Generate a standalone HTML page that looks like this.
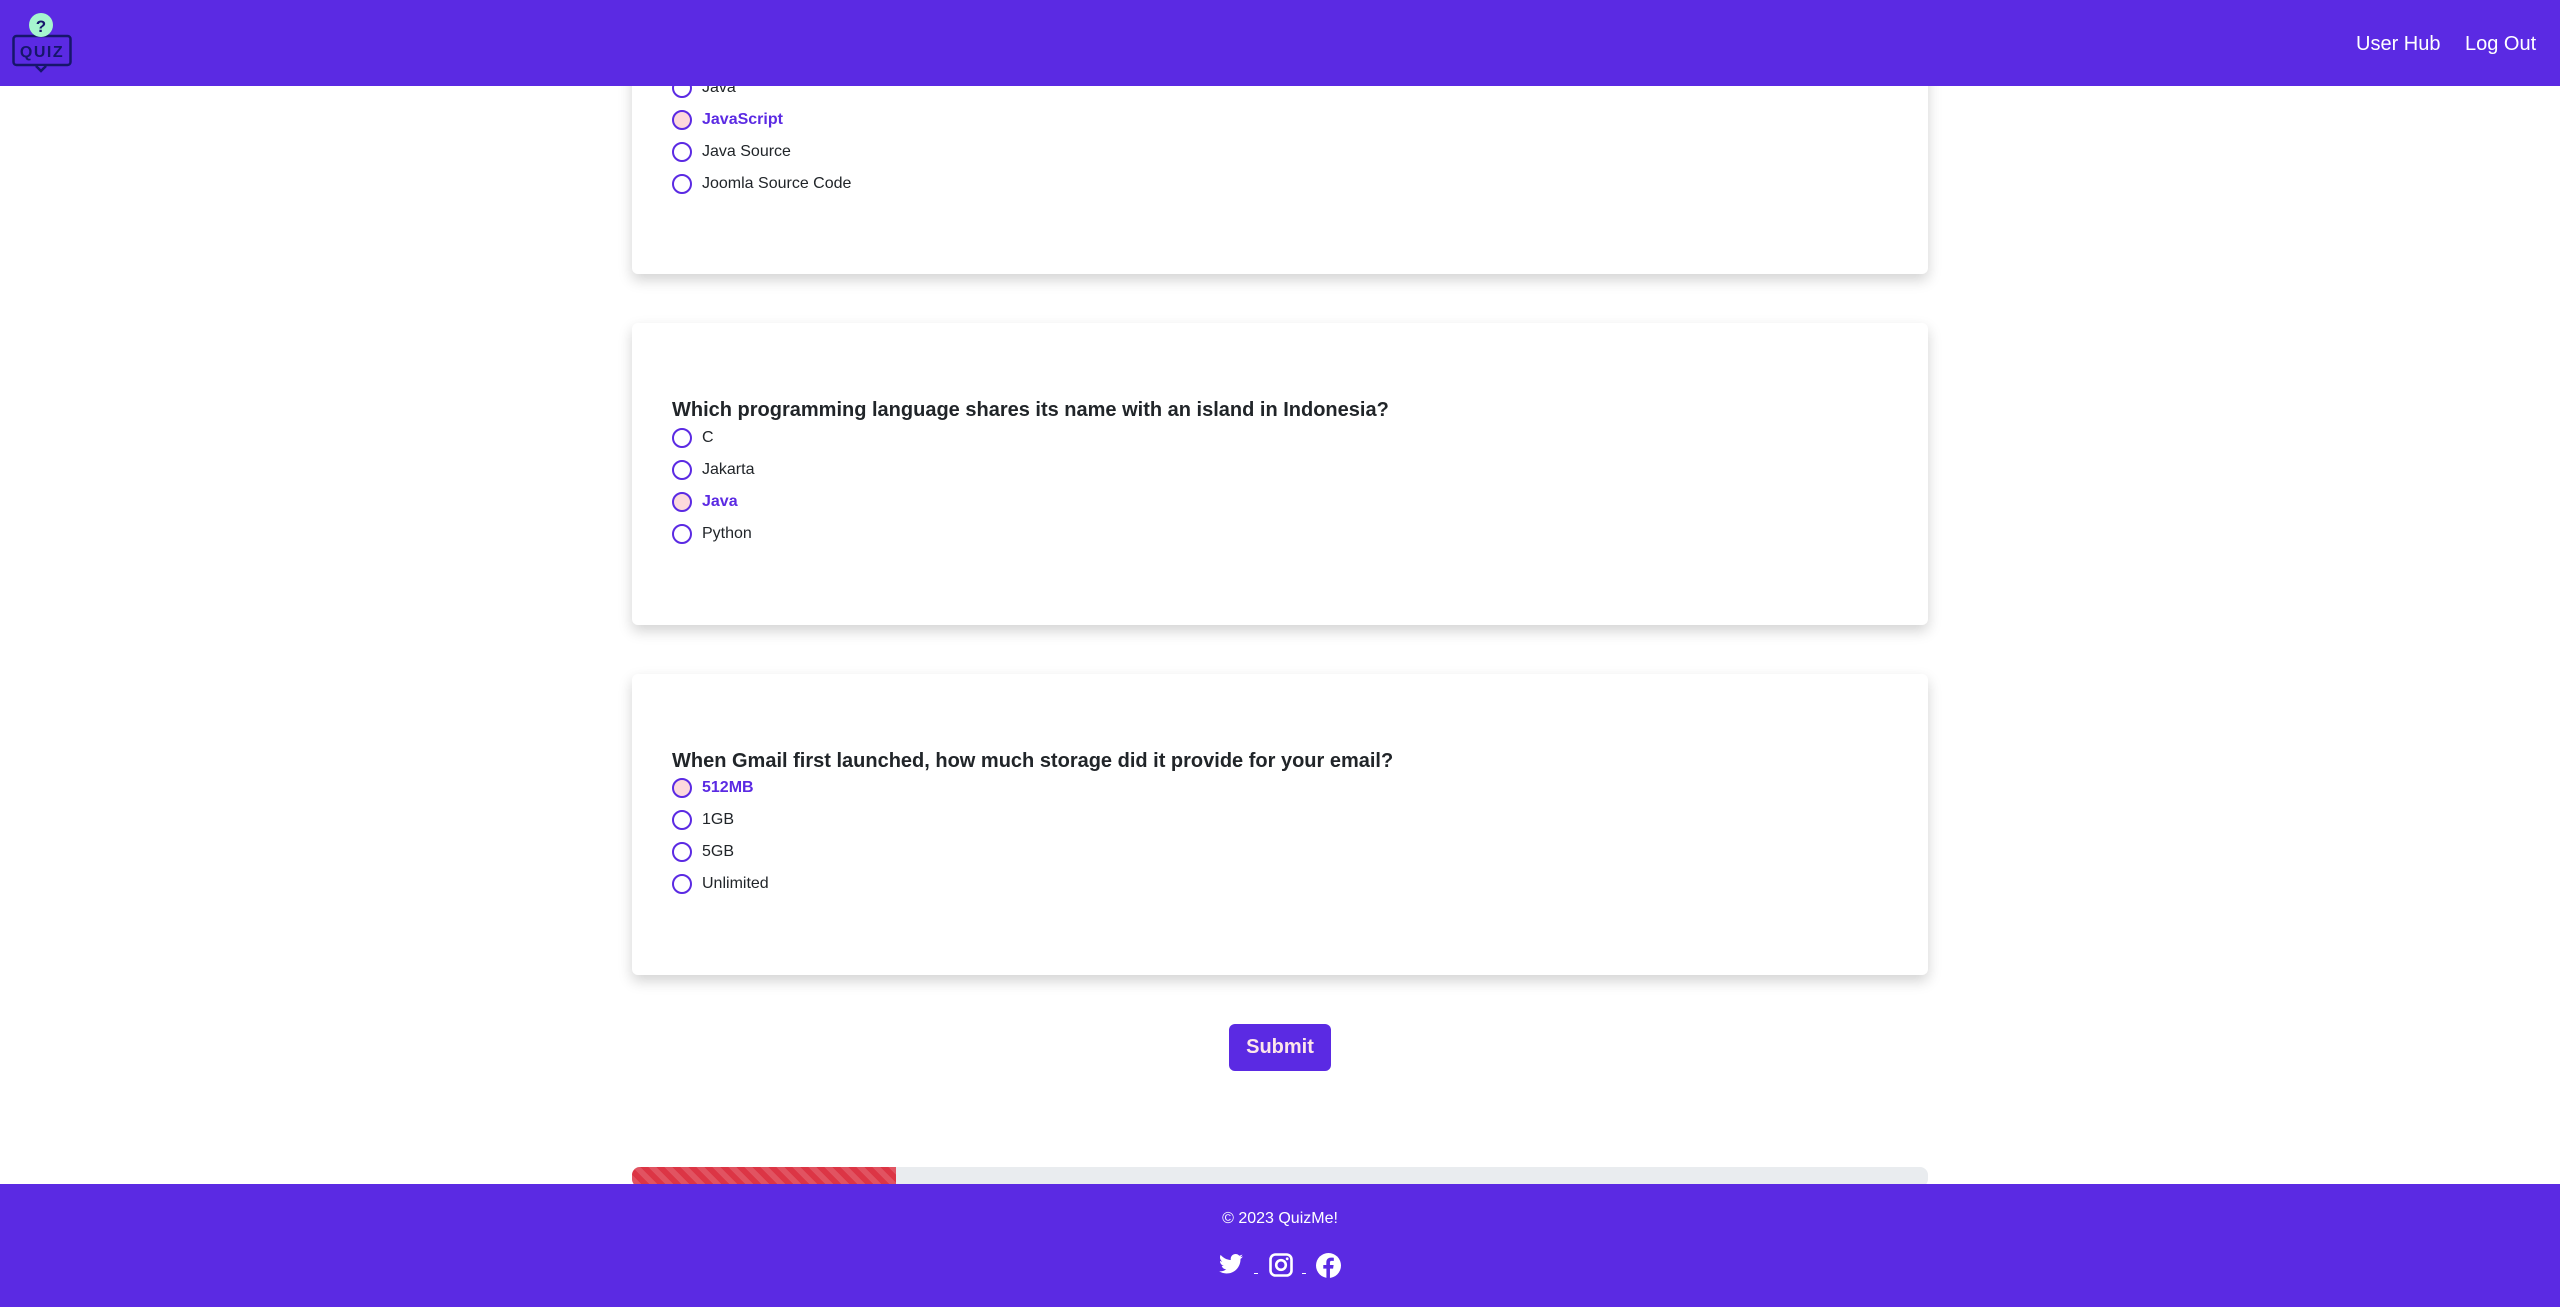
<!DOCTYPE html>
<html><head><meta charset="utf-8"><style>
*{margin:0;padding:0;box-sizing:border-box}
html,body{width:2560px;height:1307px;overflow:hidden;background:#fff;font-family:"Liberation Sans",Arial,sans-serif;color:#212529}
.nav{position:absolute;left:0;top:0;width:2560px;height:86px;background:#5b2ae3;z-index:5}
.nav a{position:absolute;top:33px;color:#fff;font-size:20px;text-decoration:none}
.card{position:absolute;left:632px;width:1296px;background:#fff;border-radius:6px;box-shadow:0 6px 14px rgba(0,0,0,.18)}
.q{position:absolute;left:40px;font-size:20px;font-weight:bold;color:#212529}
.opt{position:absolute;left:40px;height:20px;font-size:16px;line-height:20px}
.opt i{position:absolute;left:0;top:0;width:20px;height:20px;border:2.5px solid #5b2ae3;border-radius:50%}
.opt span{position:absolute;left:30px;top:0;white-space:nowrap}
.opt.sel i{background:#fdd9dc}
.opt.sel span{color:#5b2ae3;font-weight:bold}
.btn{position:absolute;left:1229px;top:1024px;width:102px;height:47px;background:#5b2ae3;border-radius:6px;color:#fde6ea;font-weight:bold;font-size:20px;text-align:center;line-height:47px}
.prog{position:absolute;left:632px;top:1167px;width:1296px;height:20px;background:#e9ecef;border-radius:8px;overflow:hidden}
.prog div{width:264px;height:100%;background-color:#dc3545;background-image:linear-gradient(45deg,rgba(255,255,255,.15) 25%,transparent 25%,transparent 50%,rgba(255,255,255,.15) 50%,rgba(255,255,255,.15) 75%,transparent 75%,transparent);background-size:16px 16px}
.foot{position:absolute;left:0;top:1184px;width:2560px;height:123px;background:#5b2ae3;color:#fff}
</style></head><body>
<div class="nav">
<svg style="position:absolute;left:0;top:0" width="90" height="86" viewBox="0 0 90 86">
<rect x="13.5" y="36" width="57" height="29" rx="3" fill="none" stroke="#16166b" stroke-width="2.5"/>
<path d="M36 66 L41 71 L46 66" fill="#5b2ae3" stroke="#16166b" stroke-width="2.5"/>
<circle cx="41" cy="25" r="12" fill="#a6f5cf"/>
<text x="41" y="32" font-family="Liberation Sans" font-weight="bold" font-size="17" fill="#16166b" text-anchor="middle">?</text>
<text x="42" y="57" font-family="Liberation Sans" font-weight="bold" font-size="16" fill="#16166b" text-anchor="middle" letter-spacing="1.5">QUIZ</text>
</svg>
<a style="left:2356px">User Hub</a><a style="left:2465px">Log Out</a>
</div>

<div class="card" style="top:-60px;height:334px">
<div class="opt" style="top:138px"><i></i><span>Java</span></div>
<div class="opt sel" style="top:170px"><i></i><span>JavaScript</span></div>
<div class="opt" style="top:202px"><i></i><span>Java Source</span></div>
<div class="opt" style="top:234px"><i></i><span>Joomla Source Code</span></div>
</div>

<div class="card" style="top:323px;height:302px">
<div class="q" style="top:76px">Which programming language shares its name with an island in Indonesia?</div>
<div class="opt" style="top:105px"><i></i><span>C</span></div>
<div class="opt" style="top:137px"><i></i><span>Jakarta</span></div>
<div class="opt sel" style="top:169px"><i></i><span>Java</span></div>
<div class="opt" style="top:201px"><i></i><span>Python</span></div>
</div>

<div class="card" style="top:674px;height:301px">
<div class="q" style="top:76px">When Gmail first launched, how much storage did it provide for your email?</div>
<div class="opt sel" style="top:104px"><i></i><span>512MB</span></div>
<div class="opt" style="top:136px"><i></i><span>1GB</span></div>
<div class="opt" style="top:168px"><i></i><span>5GB</span></div>
<div class="opt" style="top:200px"><i></i><span>Unlimited</span></div>
</div>

<div class="btn">Submit</div>
<div class="prog"><div></div></div>

<div class="foot">
<div style="position:absolute;left:0;width:2560px;top:26px;text-align:center;font-size:16px">© 2023 QuizMe!</div>
<svg style="position:absolute;left:1219px;top:69px" width="24" height="22" viewBox="0 0 24 20"><path fill="#fff" d="M24 2.4c-.9.4-1.8.6-2.8.8 1-.6 1.8-1.6 2.2-2.7-1 .6-2 1-3.1 1.2C19.3.6 18 0 16.6 0c-2.7 0-4.9 2.2-4.9 4.9 0 .4 0 .8.1 1.1C7.7 5.8 4.1 3.9 1.7.9c-.4.7-.7 1.6-.7 2.5 0 1.7.9 3.2 2.2 4.1-.8 0-1.6-.2-2.2-.6v.1c0 2.4 1.7 4.4 3.9 4.8-.4.1-.8.2-1.3.2-.3 0-.6 0-.9-.1.6 2 2.4 3.4 4.6 3.4-1.7 1.3-3.8 2.1-6.1 2.1-.4 0-.8 0-1.2-.1 2.2 1.4 4.8 2.2 7.5 2.2 9.1 0 14-7.5 14-14v-.6c1-.7 1.8-1.6 2.5-2.5z"/></svg>
<div style="position:absolute;left:1254px;top:89px;width:4px;height:1px;background:#fff"></div>
<svg style="position:absolute;left:1269px;top:69px" width="24" height="24" viewBox="0 0 24 24"><rect x="1.5" y="1.5" width="21" height="21" rx="5" fill="none" stroke="#fff" stroke-width="2.6"/><circle cx="12" cy="12" r="4.8" fill="none" stroke="#fff" stroke-width="2.6"/><circle cx="18.2" cy="5.8" r="1.4" fill="#fff"/></svg>
<div style="position:absolute;left:1302px;top:89px;width:4px;height:1px;background:#fff"></div>
<svg style="position:absolute;left:1316px;top:69px" width="25" height="25" viewBox="0 0 24 24"><circle cx="12" cy="12" r="12" fill="#fff"/><path fill="#5b2ae3" d="M13.4 24V15h3l.5-3.5h-3.5V9.3c0-1 .3-1.7 1.8-1.7h1.9V4.5c-.3 0-1.4-.1-2.7-.1-2.7 0-4.5 1.6-4.5 4.6v2.5H7v3.5h3V24z"/></svg>
</div>
</body></html>
